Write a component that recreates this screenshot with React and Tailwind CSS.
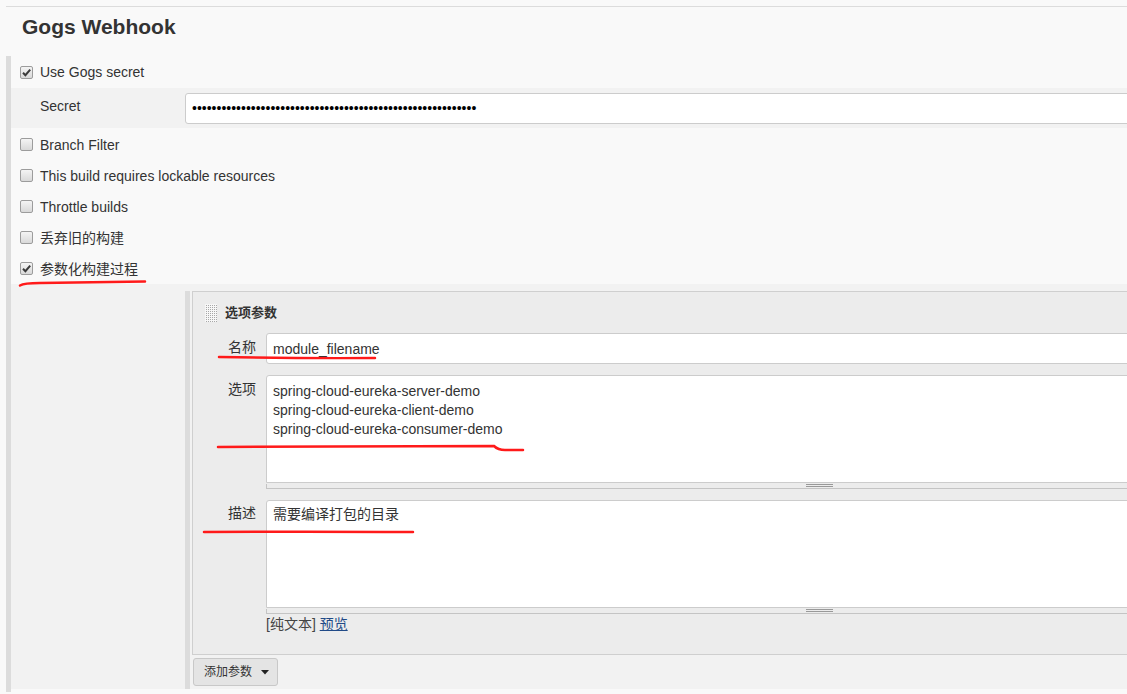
import React from "react";

function CheckBox({ checked }) {
  return (
    <span className="w-[13px] h-[13px] shrink-0 rounded-[2px] border border-[#9c9c9c] bg-linear-to-b from-[#f4f4f4] to-[#d9d9d9] flex items-center justify-center">
      {checked && (
        <svg width="11" height="11" viewBox="0 0 11 11">
          <path d="M2 5.8 L4.4 8.2 L9.2 2.6" fill="none" stroke="#3a3a3a" strokeWidth="2" />
        </svg>
      )}
    </span>
  );
}

function CheckRow({ label, checked, h = "h-[31px]" }) {
  return (
    <div className={`${h} flex items-center pl-[9px] gap-[7px]`}>
      <CheckBox checked={checked} />
      <span className="leading-[20px]">{label}</span>
    </div>
  );
}

function Grip() {
  return (
    <div className="h-[5px] border-l border-b border-[#c4c4c4] bg-[#ececec]">
      <div className="ml-[539px] mt-[1px] w-[27px] h-[3px] border-y border-[#999]" />
    </div>
  );
}

function DragHandle() {
  const dots = [];
  for (let y = 1; y < 18; y += 2) {
    for (let x = 1; x < 12; x += 2) {
      dots.push(<rect key={`${x}-${y}`} x={x} y={y} width="1" height="1" fill="#a8a8a8" />);
    }
  }
  return (
    <svg width="12" height="18" viewBox="0 0 12 18">
      <rect width="12" height="18" fill="#f7f7f7" />
      {dots}
    </svg>
  );
}

export default function App() {
  return (
    <div className="relative w-full h-[694px] overflow-hidden bg-[#f9f9f9] text-[#333] text-[14px] font-['Liberation_Sans','Noto_Sans_CJK_SC',sans-serif]">
      <div className="pt-[6px] pl-[6px]">
        <div className="border-t border-[#dcdcdc]" />
      </div>
      <h1 className="pl-[22px] mt-[6px] mb-[15px] leading-[28px] text-[21px] font-bold text-[#333]">
        Gogs Webhook
      </h1>

      <div className="ml-[6px] border-l-[5px] border-[#dcdcdc] pb-[3px]">
        <CheckRow label="Use Gogs secret" checked h="h-[32px]" />

        <div className="h-[40px] bg-[#f2f2f2] flex items-center">
          <div className="w-[174px] pl-[29px] pb-[4px] leading-[20px]">Secret</div>
          <div className="flex-1 -mr-[10px] h-[31px] bg-white border border-[#ccc] rounded-[3px] flex items-center pl-[6px] overflow-hidden">
            <span className="text-[14px] leading-[14px] text-black whitespace-nowrap">
              {"•".repeat(58)}
            </span>
          </div>
        </div>

        <div className="pt-[1px]">
          <CheckRow label="Branch Filter" />
          <CheckRow label="This build requires lockable resources" />
          <CheckRow label="Throttle builds" />
          <CheckRow label="丢弃旧的构建" />
          <CheckRow label="参数化构建过程" checked />
        </div>

        <div className="bg-[#f2f2f2] pt-[7px] pl-[174px] flex">
          <div className="w-[5px] bg-[#dcdcdc]" />
          <div className="ml-[2px] flex-1 pb-[3px]">
            <div className="border border-r-0 border-[#cfcfcf] bg-[#ececec] pt-[12px] pb-[21px]">
              <div className="h-[18px] pl-[12px] flex items-center gap-[8px]">
                <DragHandle />
                <span className="text-[13px] font-bold leading-[18px]">选项参数</span>
              </div>

              <div className="mt-[11px] flex">
                <div className="w-[63px] text-right pt-[4px] leading-[20px]">名称</div>
                <div className="ml-[10px] flex-1 -mr-[10px] h-[31px] bg-white border border-[#ccc] rounded-[3px] flex items-center pl-[6px]">
                  <span className="leading-[20px]">module_filename</span>
                </div>
              </div>

              <div className="mt-[11px] flex">
                <div className="w-[63px] text-right pt-[4px] leading-[20px]">选项</div>
                <div className="ml-[10px] flex-1 -mr-[10px]">
                  <div className="h-[108px] bg-white border border-[#ccc] rounded-t-[3px] pl-[6px] pt-[6px] leading-[19px]">
                    <div>spring-cloud-eureka-server-demo</div>
                    <div>spring-cloud-eureka-client-demo</div>
                    <div>spring-cloud-eureka-consumer-demo</div>
                  </div>
                  <Grip />
                </div>
              </div>

              <div className="mt-[11px] flex">
                <div className="w-[63px] text-right pt-[3px] leading-[20px]">描述</div>
                <div className="ml-[10px] flex-1 -mr-[10px]">
                  <div className="h-[108px] bg-white border border-[#ccc] rounded-t-[3px] pl-[6px] pt-[4px] leading-[19px]">
                    需要编译打包的目录
                  </div>
                  <Grip />
                  <div className="mt-[1px] leading-[18px]">
                    <span className="text-[#444]">[纯文本] </span>
                    <a href="#" className="text-[#204a87] underline">预览</a>
                  </div>
                </div>
              </div>
            </div>

            <button className="ml-[1px] mt-[3px] h-[28px] w-[85px] border border-[#c8c8c8] rounded-[3px] bg-[#e4e4e4] text-[12px] text-[#333] flex items-center pl-[10px] gap-[9px]">
              <span className="leading-[16px]">添加参数</span>
              <svg width="8" height="5" viewBox="0 0 8 5">
                <polygon points="0,0 8,0 4,4.5" fill="#222" />
              </svg>
            </button>
          </div>
        </div>
      </div>

      <svg className="absolute inset-0 pointer-events-none" width="1127" height="694">
        <g fill="none" stroke="#ff1a1a" strokeWidth="2.5" strokeLinecap="round">
          <path d="M20 285.5 Q24 283 40 283 L145 281.5" />
          <path d="M219 357 Q300 358.5 375 358" />
          <path d="M218 447 L494 446 Q498 450 505 450 L523 450" />
          <path d="M204 532 Q300 531.5 413 532" />
        </g>
      </svg>
    </div>
  );
}
